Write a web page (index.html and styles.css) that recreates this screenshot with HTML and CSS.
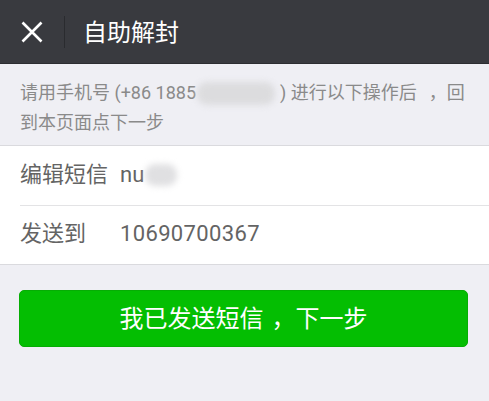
FILE: index.html
```html
<!DOCTYPE html>
<html lang="zh-CN">
<head>
<meta charset="utf-8">
<title>自助解封</title>
<link rel="stylesheet" href="styles.css">
</head>
<body>
<header class="topbar">
  <div class="close">
    <svg width="22" height="22" viewBox="0 0 22 22"><path d="M1.5 1.5 L20.5 20.5 M20.5 1.5 L1.5 20.5" stroke="#ffffff" stroke-width="2.6" fill="none"/></svg>
  </div>
  <div class="sep"></div>
  <div class="title">自助解封</div>
</header>
<p class="info">请用手机号 (+86 1885<span class="blur blur-phone"></span>) 进行以下操作后<span class="comma">，</span>回<br>到本页面点下一步</p>
<section class="group">
  <div class="row">
    <span class="label">编辑短信</span><span class="value">nu<span class="blur blur-code"></span></span>
  </div>
  <div class="row">
    <span class="label">发送到</span><span class="value digits">10690700367</span>
  </div>
</section>
<div class="actions">
  <button class="primary">我已发送短信<span class="btn-comma">，</span>下一步</button>
</div>
</body>
</html>
```
FILE: styles.css
```css
html, body {
  margin: 0;
  padding: 0;
}
body {
  width: 489px;
  height: 401px;
  background: #efeff4;
  font-family: Roboto, "Noto Sans CJK SC", sans-serif;
  overflow: hidden;
}
.topbar {
  height: 63px;
  background: #393a3f;
  border-bottom: 1px solid #2c2d31;
  display: flex;
  align-items: center;
}
.close {
  width: 22px;
  height: 22px;
  margin-left: 21px;
  margin-top: 1px;
  display: flex;
}
.sep {
  width: 1px;
  height: 32px;
  background: #2a2b2f;
  margin-left: 21px;
}
.title {
  margin-left: 18px;
  color: #ffffff;
  font-size: 24px;
  line-height: 24px;
  margin-top: 2px;
}
.info {
  margin: 0;
  padding: 14px 20px 7px 20px;
  font-size: 18px;
  line-height: 30px;
  color: #8a8a8a;
  white-space: nowrap;
}
.comma {
  margin-left: 12px;
}
.blur {
  display: inline-block;
  vertical-align: middle;
  background: #dcdcde;
  filter: blur(3px);
  border-radius: 10px;
}
.blur-phone {
  width: 78px;
  height: 23px;
  margin: 0 5px 0 1px;
  position: relative;
  top: -1px;
}
.blur-code {
  width: 32px;
  height: 22px;
  margin-left: 1px;
  background: #e0e0e2;
}
.group {
  background: #ffffff;
  border-top: 1px solid #dadade;
  border-bottom: 1px solid #dadade;
}
.row {
  height: 57px;
  padding-bottom: 2px;
  margin-left: 20px;
  display: flex;
  align-items: center;
  font-size: 22px;
  line-height: 22px;
  color: #646464;
}
.row + .row {
  border-top: 1px solid #e3e3e5;
  height: 56px;
}
.label {
  width: 100px;
}
.value {
  display: flex;
  align-items: center;
}
.digits {
  letter-spacing: 0.35px;
}
.actions {
  padding: 25px 21px 0 19px;
}
.primary {
  display: block;
  width: 100%;
  height: 57px;
  border: 1px solid #06ad04;
  border-radius: 5px;
  background: #04be02;
  color: #ffffff;
  font-family: Roboto, "Noto Sans CJK SC", sans-serif;
  font-size: 24px;
  line-height: 24px;
  padding: 0;
}
.btn-comma {
  margin-left: 8px;
}
```
